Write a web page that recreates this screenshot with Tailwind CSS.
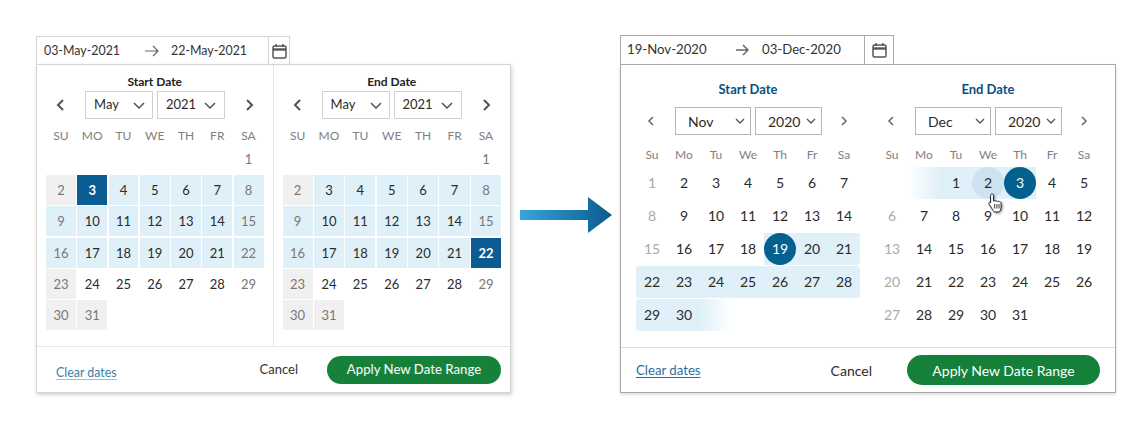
<!DOCTYPE html>
<html>
<head>
<meta charset="utf-8">
<script src="https://cdn.jsdelivr.net/npm/@tailwindcss/browser@4"></script>
</head>
<body class="bg-white">
<div class="w-[1144px] h-[432px] overflow-hidden flex items-start pl-[36px] font-['Lato',sans-serif] text-[#2b2b2b]">

  <!-- LEFT WIDGET -->
  <div class="w-[475px] mt-[36px] shrink-0">
    <div class="w-[254px] h-[28px] flex items-center border border-[#d4d4d4] border-b-0 text-[12.4px] text-[#333]">
      <span class="w-[101px] pl-[7px] pt-[2px]">03-May-2021</span>
      <svg class="w-[14px] h-[12px] ml-[7px]" viewBox="0 0 14 12" fill="none" stroke="#666" stroke-width="1.2"><path d="M0 6H13M8 1l5 5-5 5"/></svg>
      <span class="ml-[12px] w-[97px] pt-[2px]">22-May-2021</span>
      <span class="h-full border-l border-[#d4d4d4] flex-1 flex items-center justify-center">
        <svg class="w-[15px] h-[16px]" viewBox="0 0 15 16" fill="none" stroke="#555" stroke-width="1.5"><rect x="1" y="3" width="13" height="12" rx="1.5"/><path d="M1 6.5H14" stroke-width="2.4"/><path d="M4 1v3M11 1v3"/></svg>
      </span>
    </div>
    <div class="h-[329px] border border-[#d4d4d4] shadow-[1px_2px_4px_rgba(0,0,0,0.18)] flex flex-col bg-white">
      <div class="flex h-[281px]">
        <!-- start -->
        <div class="w-[237px] border-r border-[#e6e6e6] px-[9px]">
          <div class="text-center text-[12px] font-bold leading-[14px] mt-[10px] text-[#222]">Start Date</div>
          <div class="flex items-center h-[28px] mt-[2px] relative">
            <svg class="w-[9px] h-[12px] ml-[10px]" viewBox="0 0 9 12" fill="none" stroke="#555" stroke-width="2"><path d="M7 1L2 6l5 5"/></svg>
            <div class="ml-[20px] w-[68px] h-[28px] border border-[#d0d0d0] flex items-center justify-between pl-[8px] pr-[7px] text-[13px]">May<svg class="w-[12px] h-[7px]" viewBox="0 0 12 7" fill="none" stroke="#555" stroke-width="1.5"><path d="M1 1l5 5 5-5"/></svg></div>
            <div class="ml-[4px] w-[68px] h-[28px] border border-[#d0d0d0] flex items-center justify-between pl-[8px] pr-[8px] text-[13px]">2021<svg class="w-[12px] h-[7px]" viewBox="0 0 12 7" fill="none" stroke="#555" stroke-width="1.5"><path d="M1 1l5 5 5-5"/></svg></div>
            <svg class="w-[9px] h-[12px] ml-[20px]" viewBox="0 0 9 12" fill="none" stroke="#555" stroke-width="2"><path d="M2 1l5 5-5 5"/></svg>
          </div>
          <div class="grid grid-cols-7 gap-x-[1.3px] text-center text-[12px] text-[#808080] leading-[14px] mt-[10px] h-[14.7px]">
            <span>SU</span><span>MO</span><span>TU</span><span>WE</span><span>TH</span><span>FR</span><span>SA</span>
          </div>
          <div class="grid grid-cols-7 gap-[1.3px] auto-rows-[30px] text-[13px] text-center leading-[30px] text-[#2b2b2b]">
            <span></span><span></span><span></span><span></span><span></span><span></span><span class="text-[#777]">1</span>
            <span class="bg-[#f0f0f0] text-[#777]">2</span><span class="bg-[#0a5c92] text-white font-bold">3</span><span class="bg-[#e0f0f9]">4</span><span class="bg-[#e0f0f9]">5</span><span class="bg-[#e0f0f9]">6</span><span class="bg-[#e0f0f9]">7</span><span class="bg-[#e0f0f9] text-[#777]">8</span>
            <span class="bg-[#e0f0f9] text-[#777]">9</span><span class="bg-[#e0f0f9]">10</span><span class="bg-[#e0f0f9]">11</span><span class="bg-[#e0f0f9]">12</span><span class="bg-[#e0f0f9]">13</span><span class="bg-[#e0f0f9]">14</span><span class="bg-[#e0f0f9] text-[#777]">15</span>
            <span class="bg-[#e0f0f9] text-[#777]">16</span><span class="bg-[#e0f0f9]">17</span><span class="bg-[#e0f0f9]">18</span><span class="bg-[#e0f0f9]">19</span><span class="bg-[#e0f0f9]">20</span><span class="bg-[#e0f0f9]">21</span><span class="bg-[#e0f0f9] text-[#777]">22</span>
            <span class="bg-[#f0f0f0] text-[#777]">23</span><span>24</span><span>25</span><span>26</span><span>27</span><span>28</span><span class="text-[#777]">29</span>
            <span class="bg-[#f0f0f0] text-[#777]">30</span><span class="bg-[#f0f0f0] text-[#777]">31</span>
          </div>
        </div>
        <!-- end -->
        <div class="w-[237px] px-[9px]">
          <div class="text-center text-[12px] font-bold leading-[14px] mt-[10px] text-[#222]">End Date</div>
          <div class="flex items-center h-[28px] mt-[2px]">
            <svg class="w-[9px] h-[12px] ml-[10px]" viewBox="0 0 9 12" fill="none" stroke="#555" stroke-width="2"><path d="M7 1L2 6l5 5"/></svg>
            <div class="ml-[20px] w-[68px] h-[28px] border border-[#d0d0d0] flex items-center justify-between pl-[8px] pr-[7px] text-[13px]">May<svg class="w-[12px] h-[7px]" viewBox="0 0 12 7" fill="none" stroke="#555" stroke-width="1.5"><path d="M1 1l5 5 5-5"/></svg></div>
            <div class="ml-[4px] w-[68px] h-[28px] border border-[#d0d0d0] flex items-center justify-between pl-[8px] pr-[8px] text-[13px]">2021<svg class="w-[12px] h-[7px]" viewBox="0 0 12 7" fill="none" stroke="#555" stroke-width="1.5"><path d="M1 1l5 5 5-5"/></svg></div>
            <svg class="w-[9px] h-[12px] ml-[20px]" viewBox="0 0 9 12" fill="none" stroke="#555" stroke-width="2"><path d="M2 1l5 5-5 5"/></svg>
          </div>
          <div class="grid grid-cols-7 gap-x-[1.3px] text-center text-[12px] text-[#808080] leading-[14px] mt-[10px] h-[14.7px]">
            <span>SU</span><span>MO</span><span>TU</span><span>WE</span><span>TH</span><span>FR</span><span>SA</span>
          </div>
          <div class="grid grid-cols-7 gap-[1.3px] auto-rows-[30px] text-[13px] text-center leading-[30px] text-[#2b2b2b]">
            <span></span><span></span><span></span><span></span><span></span><span></span><span class="text-[#777]">1</span>
            <span class="bg-[#f0f0f0] text-[#777]">2</span><span class="bg-[#e0f0f9]">3</span><span class="bg-[#e0f0f9]">4</span><span class="bg-[#e0f0f9]">5</span><span class="bg-[#e0f0f9]">6</span><span class="bg-[#e0f0f9]">7</span><span class="bg-[#e0f0f9] text-[#777]">8</span>
            <span class="bg-[#e0f0f9] text-[#777]">9</span><span class="bg-[#e0f0f9]">10</span><span class="bg-[#e0f0f9]">11</span><span class="bg-[#e0f0f9]">12</span><span class="bg-[#e0f0f9]">13</span><span class="bg-[#e0f0f9]">14</span><span class="bg-[#e0f0f9] text-[#777]">15</span>
            <span class="bg-[#e0f0f9] text-[#777]">16</span><span class="bg-[#e0f0f9]">17</span><span class="bg-[#e0f0f9]">18</span><span class="bg-[#e0f0f9]">19</span><span class="bg-[#e0f0f9]">20</span><span class="bg-[#e0f0f9]">21</span><span class="bg-[#0a5c92] text-white font-bold">22</span>
            <span class="bg-[#f0f0f0] text-[#777]">23</span><span>24</span><span>25</span><span>26</span><span>27</span><span>28</span><span class="text-[#777]">29</span>
            <span class="bg-[#f0f0f0] text-[#777]">30</span><span class="bg-[#f0f0f0] text-[#777]">31</span>
          </div>
        </div>
      </div>
      <div class="flex-1 border-t border-[#e6e6e6] flex items-center pl-[19px] pr-[9px]">
        <a class="text-[12.4px] text-[#3a7ea8] underline underline-offset-2 decoration-[#9cc0d6] mt-[8px]">Clear dates</a>
        <span class="ml-auto text-[13px] text-[#333]">Cancel</span>
        <button class="ml-[29px] w-[174px] h-[28px] rounded-full bg-[#17813b] text-[#eef6f0] text-[13.2px] font-medium">Apply New Date Range</button>
      </div>
    </div>
  </div>

  <!-- ARROW -->
  <svg class="w-[92px] h-[36px] mt-[197px] ml-[9px] shrink-0" viewBox="0 0 92 36">
    <defs><linearGradient id="ag" x1="0" x2="1" y1="0" y2="0"><stop offset="0" stop-color="#38a5da"/><stop offset="1" stop-color="#0a5a8c"/></linearGradient></defs>
    <path d="M0 13H68V0L92 18 68 36V23H0Z" fill="url(#ag)"/>
  </svg>

  <!-- RIGHT WIDGET -->
  <div class="w-[496px] mt-[35px] ml-[8px] shrink-0">
    <div class="w-[274px] h-[29px] flex items-center border border-[#aaa] border-b-0 text-[13.2px] text-[#333]">
      <span class="w-[113px] pl-[6px]">19-Nov-2020</span>
      <svg class="w-[13px] h-[12px] ml-[2px]" viewBox="0 0 13 12" fill="none" stroke="#666" stroke-width="1.5"><path d="M0 6H12M7 1l5 5-5 5"/></svg>
      <span class="ml-[13px] w-[102px]">03-Dec-2020</span>
      <span class="h-full border-l border-[#aaa] flex-1 flex items-center justify-center">
        <svg class="w-[15px] h-[16px]" viewBox="0 0 15 16" fill="none" stroke="#555" stroke-width="1.5"><rect x="1" y="3" width="13" height="12" rx="1.5"/><path d="M1 6.5H14" stroke-width="2.4"/><path d="M4 1v3M11 1v3"/></svg>
      </span>
    </div>
    <div class="h-[329px] border border-[#aaa] shadow-[0_2px_3px_rgba(0,0,0,0.12)] flex flex-col bg-white">
      <div class="flex h-[282px] pl-[15px] gap-[16px]">
        <!-- start -->
        <div class="w-[224px]">
          <div class="text-center text-[13px] font-bold leading-[16px] mt-[16px] text-[#0b4f82]">Start Date</div>
          <div class="flex items-center h-[28px] mt-[10px]">
            <svg class="w-[8px] h-[10px] ml-[11px]" viewBox="0 0 8 10" fill="none" stroke="#666" stroke-width="1.5"><path d="M6 1L2 5l4 4"/></svg>
            <div class="ml-[20px] w-[76px] h-[28px] border border-[#b5b5b5] flex items-center justify-between pl-[12px] pr-[5px] text-[14px]">Nov<svg class="w-[10px] h-[6px]" viewBox="0 0 10 6" fill="none" stroke="#555" stroke-width="1.3"><path d="M1 1l4 4 4-4"/></svg></div>
            <div class="ml-[4px] w-[67px] h-[28px] border border-[#b5b5b5] flex items-center justify-between pl-[12px] pr-[5px] text-[14px]">2020<svg class="w-[10px] h-[6px]" viewBox="0 0 10 6" fill="none" stroke="#555" stroke-width="1.3"><path d="M1 1l4 4 4-4"/></svg></div>
            <svg class="w-[8px] h-[10px] ml-[18px]" viewBox="0 0 8 10" fill="none" stroke="#666" stroke-width="1.5"><path d="M2 1l4 4-4 4"/></svg>
          </div>
          <div class="grid grid-cols-7 text-center text-[12px] text-[#808080] leading-[14px] mt-[13px] h-[19px]">
            <span>Su</span><span>Mo</span><span>Tu</span><span>We</span><span>Th</span><span>Fr</span><span>Sa</span>
          </div>
          <div class="grid grid-cols-7 auto-rows-[32px] gap-y-[1px] text-[14px] text-center leading-[32px] text-[#2b2b2b]">
            <span class="text-[#aaa]">1</span><span>2</span><span>3</span><span>4</span><span>5</span><span>6</span><span>7</span>
            <span class="text-[#aaa]">8</span><span>9</span><span>10</span><span>11</span><span>12</span><span>13</span><span>14</span>
            <span class="text-[#aaa]">15</span><span>16</span><span>17</span><span>18</span><span class="bg-[#e0f0f9] relative"><span class="absolute inset-0 rounded-full bg-[#03608f] text-white">19</span></span><span class="bg-[#e0f0f9]">20</span><span class="bg-[#e0f0f9] rounded-r-[3px]">21</span>
            <span class="bg-[#e0f0f9] rounded-l-[3px]">22</span><span class="bg-[#e0f0f9]">23</span><span class="bg-[#e0f0f9]">24</span><span class="bg-[#e0f0f9]">25</span><span class="bg-[#e0f0f9]">26</span><span class="bg-[#e0f0f9]">27</span><span class="bg-[#e0f0f9] rounded-r-[3px]">28</span>
            <span class="bg-[#e0f0f9] rounded-l-[3px]">29</span><span class="bg-[#e0f0f9]">30</span><span class="bg-gradient-to-r from-[#e0f0f9] to-white"></span>
          </div>
        </div>
        <!-- end -->
        <div class="w-[224px]">
          <div class="text-center text-[13px] font-bold leading-[16px] mt-[16px] text-[#0b4f82]">End Date</div>
          <div class="flex items-center h-[28px] mt-[10px]">
            <svg class="w-[8px] h-[10px] ml-[11px]" viewBox="0 0 8 10" fill="none" stroke="#666" stroke-width="1.5"><path d="M6 1L2 5l4 4"/></svg>
            <div class="ml-[20px] w-[76px] h-[28px] border border-[#b5b5b5] flex items-center justify-between pl-[12px] pr-[5px] text-[14px]">Dec<svg class="w-[10px] h-[6px]" viewBox="0 0 10 6" fill="none" stroke="#555" stroke-width="1.3"><path d="M1 1l4 4 4-4"/></svg></div>
            <div class="ml-[4px] w-[67px] h-[28px] border border-[#b5b5b5] flex items-center justify-between pl-[12px] pr-[5px] text-[14px]">2020<svg class="w-[10px] h-[6px]" viewBox="0 0 10 6" fill="none" stroke="#555" stroke-width="1.3"><path d="M1 1l4 4 4-4"/></svg></div>
            <svg class="w-[8px] h-[10px] ml-[18px]" viewBox="0 0 8 10" fill="none" stroke="#666" stroke-width="1.5"><path d="M2 1l4 4-4 4"/></svg>
          </div>
          <div class="grid grid-cols-7 text-center text-[12px] text-[#808080] leading-[14px] mt-[13px] h-[19px]">
            <span>Su</span><span>Mo</span><span>Tu</span><span>We</span><span>Th</span><span>Fr</span><span>Sa</span>
          </div>
          <div class="grid grid-cols-7 auto-rows-[32px] gap-y-[1px] text-[14px] text-center leading-[32px] text-[#2b2b2b]">
            <span></span><span class="bg-gradient-to-r from-white to-[#e0f0f9]"></span><span class="bg-[#e0f0f9]">1</span><span class="bg-[#e0f0f9] relative"><span class="absolute inset-0 rounded-full bg-[#cde3f0]">2</span>
              <svg class="absolute left-[16px] top-[26px] w-[15px] h-[20px] z-10 drop-shadow-[1px_1px_1px_rgba(0,0,0,0.45)]" viewBox="0 0 15 20"><path d="M4 1c.9 0 1.500.7 1.500 1.600V8l.6-.3c.6-.2 1.300 0 1.600.5.5-.4 1.400-.3 1.800.3.600-.4 1.500-.2 1.900.4.700-.3 1.700.2 1.700 1.400v3.800c0 2.200-1.200 4.900-2.900 4.900H7.500c-1.600 0-2.300-1.200-3-2.500L1.100 11.200c-.5-.9-.2-1.700.5-2 .6-.2 1.200 0 1 .6V2.600C2.500 1.700 3.100 1 4 1z" fill="#fff" stroke="#222" stroke-width="1"/><path d="M6.700 11v4.500M8.900 11v4.500M11 11v4.500" stroke="#222" stroke-width=".9" fill="none"/></svg>
            </span><span class="bg-[#e0f0f9] relative"><span class="absolute inset-0 rounded-full bg-[#03608f] text-white">3</span></span><span>4</span><span>5</span>
            <span class="text-[#aaa]">6</span><span>7</span><span>8</span><span>9</span><span>10</span><span>11</span><span>12</span>
            <span class="text-[#aaa]">13</span><span>14</span><span>15</span><span>16</span><span>17</span><span>18</span><span>19</span>
            <span class="text-[#aaa]">20</span><span>21</span><span>22</span><span>23</span><span>24</span><span>25</span><span>26</span>
            <span class="text-[#aaa]">27</span><span>28</span><span>29</span><span>30</span><span>31</span>
          </div>
        </div>
      </div>
      <div class="flex-1 border-t border-[#e0e0e0] flex items-center pl-[15px] pr-[15px]">
        <a class="text-[13.2px] text-[#1f6f9f] underline underline-offset-2 mt-[1px]">Clear dates</a>
        <span class="ml-auto text-[14px] text-[#2b2b2b]">Cancel</span>
        <button class="ml-[35px] w-[193px] h-[30px] rounded-full bg-[#15803a] text-white text-[14px]">Apply New Date Range</button>
      </div>
    </div>
  </div>
</div>
</body>
</html>
